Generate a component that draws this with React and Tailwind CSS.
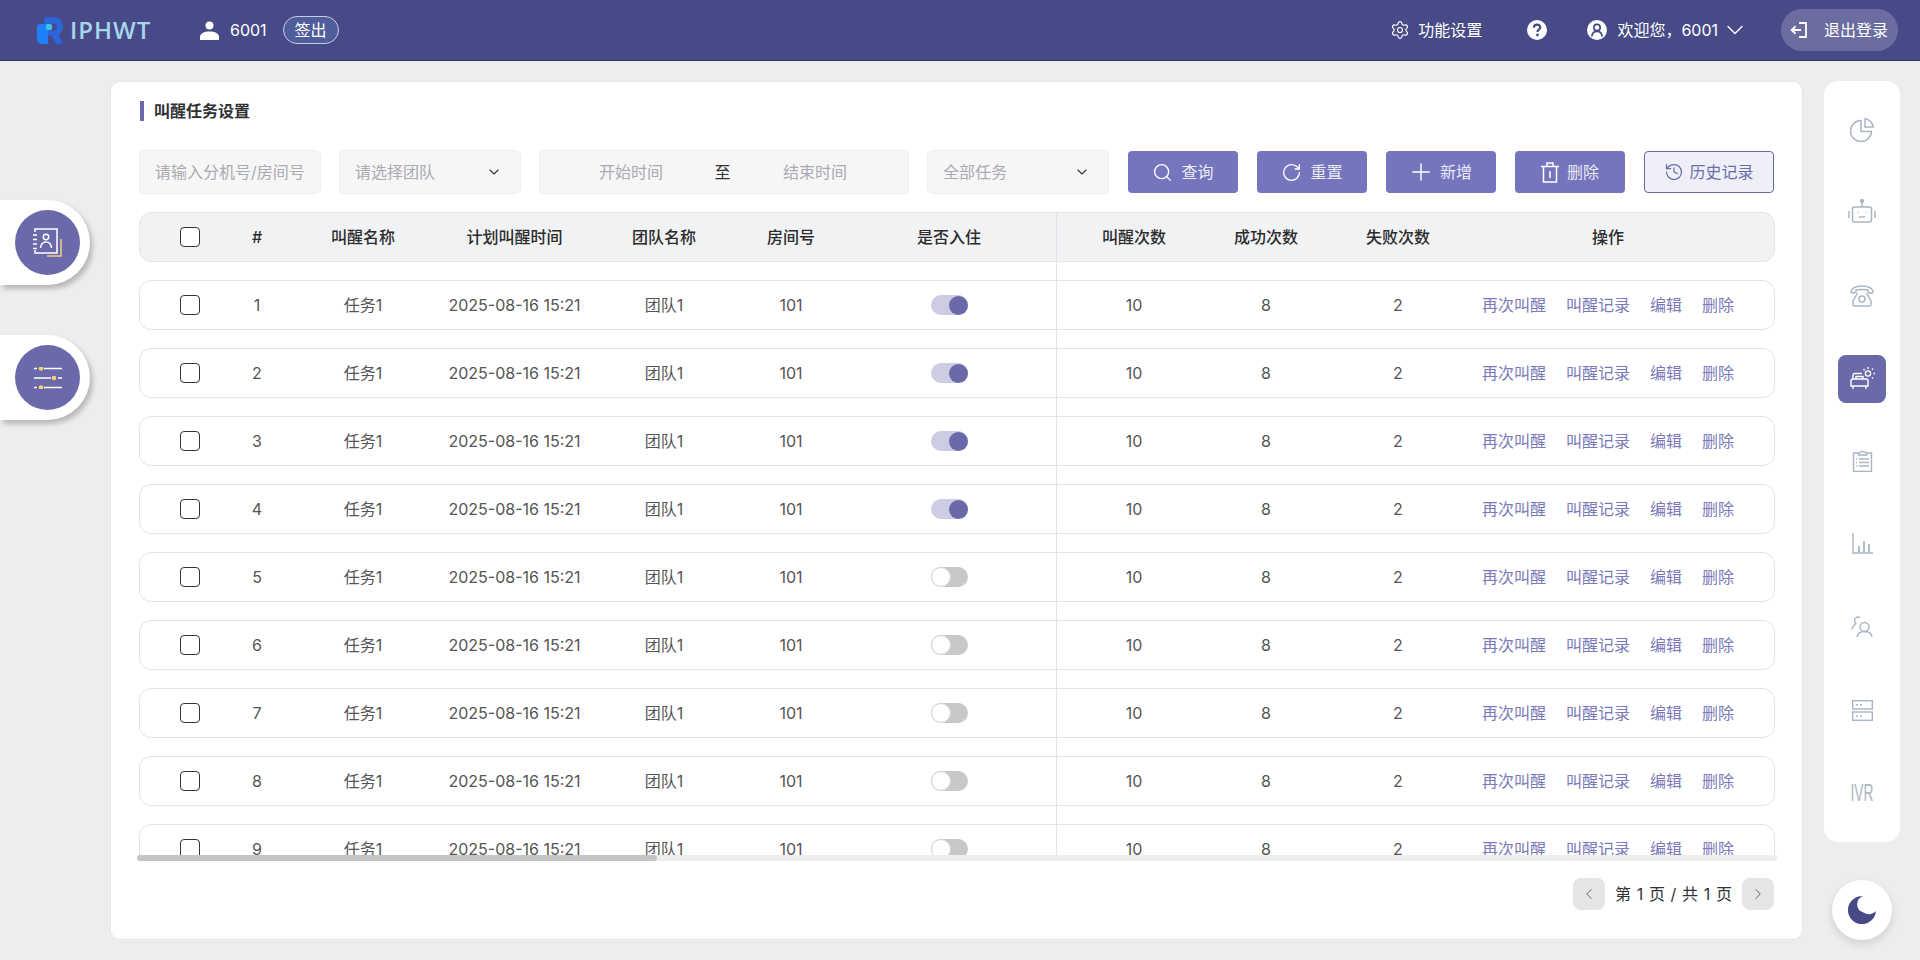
import React from "react";
import { Search, RotateCw, Plus, History, ChevronDown, ChevronLeft, ChevronRight, Settings } from "lucide-react";

const FONT = "[font-family:'Inter','Noto_Sans_CJK_SC',sans-serif]";

const Logo = () => (
  <svg width="26" height="27" viewBox="0 0 26 27">
    <path d="M0 10a3 3 0 0 1 3-3h8v20H5a5 5 0 0 1-5-5z" fill="#1f80f7" />
    <path d="M7 3.500A3.500 3.500 0 0 1 10.500 0h6a9.500 9.500 0 0 1 4.800 17.700L25.500 25a1.300 1.300 0 0 1-1.100 2h-5.200L14.500 18.500H11v-5h5.500a3.500 3.500 0 0 0 0-7H7z" fill="#2a66dc" />
    <circle cx="12" cy="10" r="3.200" fill="#38c6e6" />
  </svg>
);

const UserSolid = () => (
  <svg width="19" height="19" viewBox="0 0 19 19" fill="#fff">
    <circle cx="9.500" cy="4.500" r="4" />
    <path d="M0 19v-3c0-3.500 4-5.500 9.500-5.500S19 12.500 19 16v3z" />
  </svg>
);

const HelpCircle = () => (
  <svg width="20" height="20" viewBox="0 0 20 20">
    <circle cx="10" cy="10" r="10" fill="#fff" />
    <path d="M6.800 7.600C6.900 5.700 8.200 4.600 10.100 4.600c1.900 0 3.200 1.100 3.200 2.700 0 1.300-.7 1.900-1.600 2.500-.8.500-1.100.9-1.100 1.800v.3" fill="none" stroke="#484a87" strokeWidth="2.200" />
    <circle cx="10.500" cy="15" r="1.400" fill="#484a87" />
  </svg>
);

const UserCircle = () => (
  <svg width="20" height="20" viewBox="0 0 20 20">
    <circle cx="10" cy="10" r="10" fill="#fff" />
    <circle cx="10" cy="7.500" r="3.200" fill="none" stroke="#484a87" strokeWidth="1.700" />
    <path d="M4.800 16.500c.3-3.300 2.300-5.200 5.200-5.200s4.900 1.900 5.200 5.200" fill="none" stroke="#484a87" strokeWidth="1.700" />
  </svg>
);

const LogoutIcon = () => (
  <svg width="18" height="18" viewBox="0 0 18 18" fill="none" stroke="#fff" strokeWidth="1.800">
    <path d="M9 2h7v14H9" />
    <path d="M11 9H2M5.500 5.200 1.800 9l3.700 3.800" strokeWidth="2" />
  </svg>
);

const TrashIcon = () => (
  <svg width="18" height="21" viewBox="0 0 18 21" fill="none" stroke="#fff" strokeWidth="1.500">
    <path d="M0 4.500h18M6 4V1h6v3" />
    <path d="M2.500 4.500V20h13V4.500" />
    <path d="M9 9v7" />
  </svg>
);

const Moon = () => (
  <svg width="28" height="28" viewBox="0 0 28 28">
    <path d="M12 0.300A14 14 0 1 0 27.900 15 9 9 0 0 1 15.500 16.500 8.500 8.500 0 0 1 15 0.200 14 14 0 0 0 12 .3z" fill="#484a87" />
  </svg>
);

const ContactIcon = () => (
  <svg width="29" height="29" viewBox="0 0 29 29" fill="none">
    <path d="M2 4V1h22v24H2v-3" stroke="#fff" strokeWidth="1.500" />
    <path d="M0 7h4M0 11.500h4M0 16h4M0 20.500h4" stroke="#fff" strokeWidth="1.500" />
    <circle cx="13" cy="9" r="2.700" stroke="#fff" strokeWidth="1.500" />
    <path d="M7.500 20c.4-4 2.500-6 5.500-6s5.100 2 5.500 6" stroke="#fff" strokeWidth="1.500" />
    <path d="M28 11v17H14" stroke="#f2cd86" strokeWidth="1.500" />
  </svg>
);

const SlidersIcon = () => (
  <svg width="28" height="22" viewBox="0 0 28 22" fill="none">
    <path d="M0 1.500h3M10 1.500h18M0 11h17M24 11h4M0 20.500h3M10 20.500h18" stroke="#fff" strokeWidth="1.700" />
    <circle cx="7" cy="1.500" r="2.300" fill="#f5d080" />
    <circle cx="20" cy="11" r="2.300" fill="#f5d080" />
    <circle cx="7" cy="20.500" r="2.300" fill="#f5d080" />
  </svg>
);

const G = "#a9b5c4";
const SideIcons = [
  <svg key="a" width="24" height="24" viewBox="0 0 24 24" fill="none" stroke={G} strokeWidth="1.500">
    <path d="M11 2.500a10.500 10.500 0 1 0 10.500 11H11z" />
    <path d="M15 .8c4.300.5 7.700 3.900 8.200 8.200H15z" />
  </svg>,
  <svg key="b" className="-mt-1" width="28" height="24" viewBox="0 0 28 24" fill="none" stroke={G} strokeWidth="1.500">
    <circle cx="14" cy="2" r="1.400" fill={G} />
    <path d="M14 3.500V8" />
    <rect x="4.500" y="8" width="19" height="15" rx="2" />
    <path d="M1 12v7M27 12v7M11 18h6" />
    <path d="M9.500 13.500h1M17.500 13.500h1" strokeWidth="1.600" />
  </svg>,
  <svg key="c" width="24" height="22" viewBox="0 0 24 22" fill="none" stroke={G} strokeWidth="1.500">
    <path d="M1 7c-.3-3 4-6 11-6s11.300 3 11 6c-.1 1-1 1.200-2.500 1-1.600-.2-2.500-.5-2.500-1.500V5c-2-.8-10-.8-12 0v1.500C6 7.500 5 7.800 3.500 8 2 8.200 1.100 8 1 7z" />
    <path d="M7.500 8 3 16v3.500A1.500 1.500 0 0 0 4.500 21h15a1.500 1.500 0 0 0 1.500-1.500V16L16.500 8" />
    <circle cx="12" cy="14" r="3" />
  </svg>,
  <svg key="d" width="25" height="23" viewBox="0 0 25 23" fill="none" stroke="#fff" strokeWidth="1.400">
    <path d="M3 12V8a1.500 1.500 0 0 1 1.500-1.500H12" />
    <path d="M1 14a2 2 0 0 1 2-2h13a2 2 0 0 1 2 2v5H1zM3 19v3M16 19v3" />
    <path d="M6 12v-2.500h7V12" />
    <circle cx="18" cy="6.500" r="2.600" />
    <path d="M18 0v2M23.500 6.500H25M22 2.500l1-1M13.500 2l1.200 1.200M22 10.500l1 1" />
  </svg>,
  <svg key="e" className="-mt-0.5" width="21" height="22" viewBox="0 0 21 22" fill="none" stroke={G} strokeWidth="1.400">
    <path d="M7 3H1.500v18.500h18V3H14" />
    <path d="M6.500 5V3.500l4-2.500 4 2.500V5z" />
    <path d="M4 9h1M7 9h10M4 12.500h1M7 12.500h10M4 16h1M7 16h10" />
  </svg>,
  <svg key="f" className="-mt-0.5" width="21" height="21" viewBox="0 0 21 21" fill="none" stroke={G} strokeWidth="1.400">
    <path d="M1 0v20h20" />
    <path d="M7 19v-6M12 19V8M17 19v-8" strokeWidth="1.800" />
  </svg>,
  <svg key="g" className="-mt-0.5" width="22" height="22" viewBox="0 0 22 22" fill="none" stroke={G} strokeWidth="1.400">
    <path d="M9 1.500C7 .5 4.500 1.200 3.800 3.300 3.300 4.800 3.800 6.300 4.800 7.500 3 9 1.500 11 .8 13.500" />
    <circle cx="13.500" cy="11" r="4.500" />
    <path d="M6 21c.4-3.500 3-5.500 7.500-5.500s7.100 2 7.500 5.500" />
  </svg>,
  <svg key="h" width="21" height="21" viewBox="0 0 21 21" fill="none" stroke={G} strokeWidth="1.400">
    <rect x=".7" y=".7" width="19.600" height="8.300" />
    <rect x=".7" y="12" width="19.600" height="8.300" />
    <path d="M4 4.800h2M8 4.800h2M4 16.200h2M8 16.200h2" strokeWidth="1.500" />
  </svg>,
];

const Toggle = ({ on }) =>
  on ? (
    <div className="w-[37px] h-5 rounded-full bg-[#cccce3] flex justify-end items-center">
      <div className="w-[19px] h-[19px] rounded-full bg-[#6a6aaa]" />
    </div>
  ) : (
    <div className="w-[37px] h-5 rounded-full bg-[#c8c8c8] flex items-center">
      <div className="w-5 h-5 rounded-full bg-white border border-[#d4d4d4]" />
    </div>
  );

const Cols = ({ className, cells }) => (
  <div className={"flex items-center " + className}>
    <div className="w-[101px] shrink-0 flex justify-center pr-[2px]">{cells[0]}</div>
    <div className="w-[32px] shrink-0 text-center">{cells[1]}</div>
    <div className="w-[180px] shrink-0 text-center">{cells[2]}</div>
    <div className="w-[123px] shrink-0 flex justify-center whitespace-nowrap">{cells[3]}</div>
    <div className="w-[176px] shrink-0 text-center">{cells[4]}</div>
    <div className="w-[78px] shrink-0 text-center">{cells[5]}</div>
    <div className="w-[218px] ml-[10px] shrink-0 flex justify-center">{cells[6]}</div>
    <div className="w-[152px] shrink-0 text-center">{cells[7]}</div>
    <div className="w-[112px] shrink-0 text-center">{cells[8]}</div>
    <div className="w-[152px] shrink-0 text-center">{cells[9]}</div>
    <div className="w-[268px] shrink-0 flex justify-center">{cells[10]}</div>
  </div>
);

const Check = () => <div className="w-5 h-5 rounded-[4px] border border-[#333] bg-white" />;

const Ops = () => (
  <div className="flex gap-5 text-[#7a7ab8] whitespace-nowrap">
    <span>再次叫醒</span>
    <span>叫醒记录</span>
    <span>编辑</span>
    <span>删除</span>
  </div>
);

const Btn = ({ icon, label }) => (
  <button className="w-[110px] h-[42px] rounded-[4px] bg-[#7575be] text-white flex items-center justify-center gap-2 text-base">
    {icon}
    <span className="opacity-85">{label}</span>
  </button>
);

const Filter = ({ w, text, chevron }) => (
  <div className={w + " h-[44px] rounded-[6px] bg-[#f6f6f7] border border-[#efefef] flex items-center justify-between pl-[15px] pr-[18px] text-base text-[#a8abb2] whitespace-nowrap"}>
    <span>{text}</span>
    {chevron && <ChevronDown size={16} strokeWidth={1.7} className="text-[#333]" />}
  </div>
);

const PillTab = ({ icon }) => (
  <div className="w-[90px] h-[85px] rounded-r-[43px] bg-white shadow-[3px_4px_5px_rgba(0,0,0,0.22)] flex items-center justify-end pr-[10px]">
    <div className="w-[65px] h-[65px] rounded-full bg-[#6a6aaa] flex items-center justify-center">{icon}</div>
  </div>
);

export default function App() {
  const rows = [1, 2, 3, 4, 5, 6, 7, 8, 9];
  return (
    <div className={"relative w-[1920px] h-[960px] overflow-hidden bg-[#ededed] flex flex-col " + FONT}>
      <header className="h-[61px] shrink-0 bg-[#484a87] border-b border-[#33344f] flex items-center text-white text-base pl-[37px] pr-[22px]">
        <div className="flex items-center gap-[7px] w-[163px]">
          <Logo />
          <span className="text-[24px] leading-none font-semibold tracking-[1px] text-[#a6d6ea] [font-family:'Open_Sans',sans-serif]">IPHWT</span>
        </div>
        <UserSolid />
        <span className="ml-[11px]">6001</span>
        <span className="ml-[16px] w-[56px] h-[28px] rounded-full border border-[#c9cbe6] bg-[#4f5d9b] flex items-center justify-center">签出</span>
        <div className="ml-auto flex items-center">
          <Settings size={20} strokeWidth={1.400} />
          <span className="ml-[8px]">功能设置</span>
          <span className="ml-[45px]"><HelpCircle /></span>
          <span className="ml-[40px]"><UserCircle /></span>
          <span className="ml-[10px]">欢迎您，6001</span>
          <ChevronDown size={28} strokeWidth={1.200} className="ml-[3px]" />
          <div className="ml-[32px] w-[117px] h-[42px] rounded-full bg-[#6b6c9f] flex items-center pl-[9px] gap-[16px]">
            <LogoutIcon />
            <span>退出登录</span>
          </div>
        </div>
      </header>

      <div className="flex flex-1 pt-5 pl-[110px] items-start">
        <main className="w-[1693px] h-[859px] bg-white rounded-[10px] border border-[#e6e6e6] pt-[19px] px-[28px] flex flex-col">
          <div className="ml-px h-5 border-l-4 border-[#6a6aaa] pl-[10px] flex items-center text-base font-bold text-[#303133] leading-none">叫醒任务设置</div>
          <div className="mt-[29px] flex items-center h-[44px] gap-[18px]">
            <Filter w="w-[182px]" text="请输入分机号/房间号" />
            <Filter w="w-[182px]" text="请选择团队" chevron />
            <div className="w-[370px] h-[44px] rounded-[6px] bg-[#f6f6f7] border border-[#efefef] flex items-center text-base text-[#a8abb2]">
              <span className="w-[148px] pl-[59px] whitespace-nowrap">开始时间</span>
              <span className="w-[65px] text-center text-[#303133] pl-[4px]">至</span>
              <span className="pl-[30px] whitespace-nowrap">结束时间</span>
            </div>
            <Filter w="w-[182px]" text="全部任务" chevron />
            <div className="ml-px flex items-center gap-[19px]">
              <Btn icon={<Search size={21} strokeWidth={1.500} />} label="查询" />
              <Btn icon={<RotateCw size={21} strokeWidth={1.500} />} label="重置" />
              <Btn icon={<Plus size={28} strokeWidth={1.200} className="-mx-[3px]" />} label="新增" />
              <Btn icon={<TrashIcon />} label="删除" />
            </div>
            <button className="ml-px w-[130px] h-[42px] rounded-[4px] bg-[#efeff8] border border-[#6a6aaa] text-[#6a6ea8] flex items-center justify-center gap-[5px] text-base">
              <History size={20} strokeWidth={1.500} />
              <span>历史记录</span>
            </button>
          </div>

          <div className="relative mt-[18px] h-[649px] w-[1640px] -ml-[2px] pl-[2px] overflow-hidden">
            <Cols
              className="w-[1636px] h-[50px] rounded-[12px] bg-[#f1f2f4] border border-[#e4e5e8] text-base font-medium text-[#2c2c2c]"
              cells={[<Check />, "#", "叫醒名称", "计划叫醒时间", "团队名称", "房间号", "是否入住", "叫醒次数", "成功次数", "失败次数", "操作"]}
            />
            <div className="mt-[18px] flex flex-col gap-[18px]">
              {rows.map((n) => (
                <Cols
                  key={n}
                  className="w-[1636px] h-[50px] shrink-0 rounded-[12px] bg-white border border-[#e3e3e6] text-base text-[#555]"
                  cells={[<Check />, n, "任务1", "2025-08-16 15:21", "团队1", "101", <Toggle on={n <= 4} />, "10", "8", "2", <Ops />]}
                />
              ))}
            </div>
            <div className="absolute left-[919px] top-0 bottom-[6px] w-px bg-[#e2e3e6]" />
            <div className="absolute left-0 bottom-0 w-[1640px] h-[6px] rounded-full bg-[#eeeeee]">
              <div className="w-[520px] h-[6px] rounded-full bg-[#c4c4c4]" />
            </div>
          </div>

          <div className="mt-[17px] flex items-center justify-end h-8 w-[1635px] text-base text-[#303133]">
            <div className="w-8 h-8 rounded-[8px] bg-[#e5e5e5] flex items-center justify-center"><ChevronLeft size={18} strokeWidth={1.300} className="text-[#666]" /></div>
            <span className="mx-[10px] whitespace-nowrap [word-spacing:1.2px]">第 1 页 / 共 1 页</span>
            <div className="w-8 h-8 rounded-[8px] bg-[#e5e5e5] flex items-center justify-center"><ChevronRight size={18} strokeWidth={1.300} className="text-[#666]" /></div>
          </div>
        </main>

        <div className="ml-[21px] w-[76px] flex flex-col items-center">
          <nav className="w-[76px] h-[761px] rounded-[14px] bg-white pt-[7px] flex flex-col items-center">
            {SideIcons.map((ic, i) => (
              <div key={i} className="h-[83px] w-full flex items-center justify-center">
                {i === 3 ? (
                  <div className="w-12 h-12 rounded-[8px] bg-[#6a6aaa] flex items-center justify-center">{ic}</div>
                ) : (
                  ic
                )}
              </div>
            ))}
            <div className="h-[83px] w-full flex items-center justify-center text-[23px] text-[#a9b5c4] [font-family:'Liberation_Sans',sans-serif] scale-x-[0.6]">IVR</div>
          </nav>
          <div className="mt-[38px] w-[60px] h-[60px] rounded-full bg-white shadow-[0_4px_8px_rgba(0,0,0,0.12)] flex items-center justify-center"><Moon /></div>
        </div>
      </div>

      <div className="absolute left-0 top-[200px] flex flex-col gap-[50px]">
        <PillTab icon={<ContactIcon />} />
        <PillTab icon={<SlidersIcon />} />
      </div>
    </div>
  );
}
